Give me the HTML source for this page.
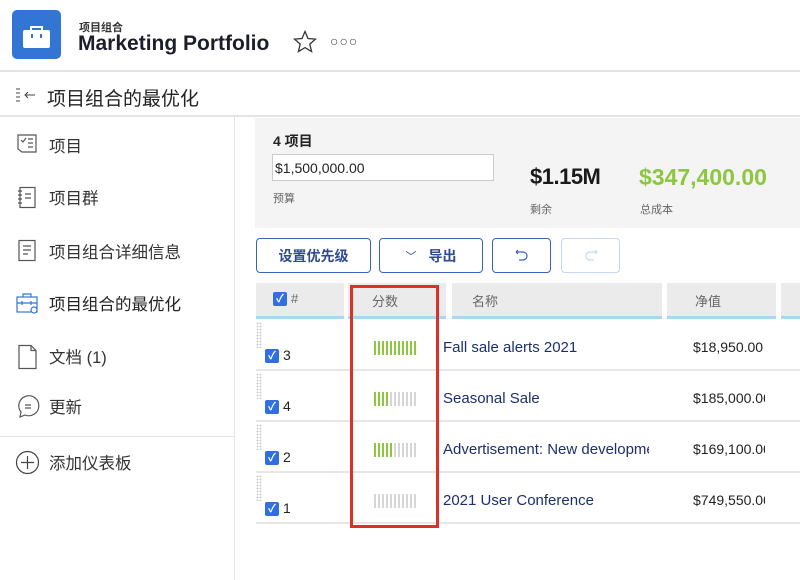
<!DOCTYPE html>
<html><head><meta charset="utf-8"><style>
*{margin:0;padding:0;box-sizing:border-box}
body{width:800px;height:580px;overflow:hidden;background:#fff;font-family:"Liberation Sans","Noto Sans CJK SC",sans-serif;color:#222;position:relative}
.a{position:absolute}
.side{font-size:16.5px;color:#333}
.btn{position:absolute;top:238px;height:35px;border:1.5px solid #3b63b8;border-radius:4px;color:#2d4b8e;font-size:14px;font-weight:bold;display:flex;align-items:center;justify-content:center}
.th{position:absolute;top:283px;height:36px;background:#ebebeb;border-bottom:3px solid #a9d8f5;font-size:13px;color:#666;padding:8px 0 0 20px}
.row{position:absolute;left:256px;width:544px;height:51px;border-bottom:2px solid #e6e6e6}
.cb{position:absolute;width:14px;height:14px;background:#2f6fe0;border-radius:2px;color:#fff;font-size:11px;line-height:14px;text-align:center;font-weight:bold}
.bars{position:absolute;left:118px;top:21px;display:flex;gap:2px}
.bars i{display:block;width:2px;height:14px;background:#d6d6d6}
.bars i.g{background:#8dc63f}
.nm{position:absolute;left:187px;top:19px;font-size:15px;color:#1c2e6e;width:206px;overflow:hidden;white-space:nowrap}
.val{position:absolute;left:437px;top:19px;font-size:14px;color:#222;width:72px;overflow:hidden;white-space:nowrap}
.dots{position:absolute;left:0;top:2px;width:6px;height:26px;background-image:radial-gradient(#ccc 0.8px,transparent 1px);background-size:3px 3px}
</style></head><body>
<!-- header -->
<div class="a" style="left:12px;top:10px;width:49px;height:49px;background:#3275d4;border-radius:5px"></div>
<svg class="a" style="left:12px;top:10px" width="49" height="49"><path d="M19 20v-3h11v3" stroke="#fff" stroke-width="2" fill="none"/><rect x="11" y="20" width="27" height="18" rx="2" fill="#fff"/><rect x="19" y="24" width="2" height="4" fill="#3275d4"/><rect x="28" y="24" width="2" height="4" fill="#3275d4"/></svg>
<div class="a" style="left:79px;top:19px;font-size:11px;font-weight:bold;color:#333">项目组合</div>
<div class="a" style="left:78px;top:32px;font-size:21px;font-weight:bold;color:#1d1d2b">Marketing Portfolio</div>
<svg class="a" style="left:293px;top:30px" width="24" height="23"><path d="M12 1.5l3 7 7.5.6-5.7 5 1.8 7.4L12 17.6 5.4 21.5l1.8-7.4-5.7-5 7.5-.6z" fill="none" stroke="#333" stroke-width="1.3"/></svg>
<div class="a" style="left:330px;top:33px;font-size:14px;color:#444;letter-spacing:1px">○○○</div>
<div class="a" style="left:0;top:70px;width:800px;height:2px;background:#e4e4e4"></div>
<svg class="a" style="left:15px;top:87px" width="24" height="18"><g stroke="#444" stroke-width="1"><path d="M1 2h4M1 6h4M1 10h4M1 14h4M10 8h10M13 5l-3 3 3 3" fill="none"/></g></svg>
<div class="a" style="left:47px;top:84px;font-size:19px;color:#222">项目组合的最优化</div>
<div class="a" style="left:0;top:115px;width:800px;height:2px;background:#e4e4e4"></div>
<!-- sidebar -->
<div class="a" style="left:234px;top:117px;width:1px;height:463px;background:#e4e4e4"></div>
<svg class="a" style="left:16px;top:133px" width="24" height="24" fill="none" stroke="#555" stroke-width="1.2"><path d="M2 2h18v17H6l-4-3z"/><path d="M5 7l2 2 3-4M12 6h5M12 10h5M12 14h5"/></svg>
<div class="a side" style="left:49px;top:133px">项目</div>
<svg class="a" style="left:16px;top:186px" width="24" height="24" fill="none" stroke="#555" stroke-width="1.2"><rect x="4" y="1.5" width="15" height="20"/><path d="M2 5h4M2 9h4M2 13h4M2 17h4M9 8h6M9 12h6"/></svg>
<div class="a side" style="left:49px;top:185px">项目群</div>
<svg class="a" style="left:16px;top:239px" width="24" height="24" fill="none" stroke="#555" stroke-width="1.2"><rect x="3" y="1.5" width="16" height="20"/><path d="M7 7h8M7 11h8M7 15h5"/></svg>
<div class="a side" style="left:49px;top:239px">项目组合详细信息</div>
<svg class="a" style="left:16px;top:292px" width="24" height="24" fill="none" stroke="#3275d4" stroke-width="1.2"><rect x="1" y="5" width="20" height="15"/><path d="M7 5V2h8v3M1 11h20M6 9v4M15 9v4"/><circle cx="18" cy="18" r="3" fill="#fff"/></svg>
<div class="a side" style="left:49px;top:291px;color:#222">项目组合的最优化</div>
<svg class="a" style="left:16px;top:344px" width="24" height="26" fill="none" stroke="#555" stroke-width="1.2"><path d="M3 1.5h12l5 5v18H3z M15 1.5v5h5"/></svg>
<div class="a side" style="left:49px;top:344px">文档 (1)</div>
<svg class="a" style="left:16px;top:395px" width="24" height="26" fill="none" stroke="#555" stroke-width="1.2"><path d="M4 22l1-5A10 10 0 1 1 9 20z"/><path d="M9 10h6M9 13h6"/></svg>
<div class="a side" style="left:49px;top:394px">更新</div>
<div class="a" style="left:0;top:436px;width:234px;height:1px;background:#e4e4e4"></div>
<svg class="a" style="left:15px;top:450px" width="26" height="26" fill="none" stroke="#444" stroke-width="1.2"><circle cx="12.5" cy="12.5" r="11"/><path d="M12.5 6v13M6 12.5h13"/></svg>
<div class="a side" style="left:49px;top:450px">添加仪表板</div>
<!-- summary -->
<div class="a" style="left:255px;top:118px;width:545px;height:110px;background:#f4f4f4"></div>
<div class="a" style="left:273px;top:131px;font-size:14px;font-weight:bold;color:#222">4 项目</div>
<div class="a" style="left:272px;top:154px;width:222px;height:27px;background:#fff;border:1px solid #ccc;font-size:14px;padding:5px 2px;color:#222">$1,500,000.00</div>
<div class="a" style="left:273px;top:190px;font-size:11px;color:#666">预算</div>
<div class="a" style="left:530px;top:164px;font-size:22px;font-weight:bold;color:#1a1a1a;letter-spacing:-0.5px">$1.15M</div>
<div class="a" style="left:530px;top:201px;font-size:11px;color:#666">剩余</div>
<div class="a" style="left:639px;top:164px;font-size:23px;font-weight:bold;color:#8dc63f">$347,400.00</div>
<div class="a" style="left:640px;top:201px;font-size:11px;color:#666">总成本</div>
<!-- buttons -->
<div class="btn" style="left:256px;width:115px">设置优先级</div>
<div class="btn" style="left:379px;width:104px"><span style="font-weight:normal;font-size:11px;margin-right:12px">﹀</span>导出</div>
<div class="btn" style="left:492px;width:59px"><svg width="16" height="14" fill="none" stroke="#3b63b8" stroke-width="1.2"><path d="M2 3l2 -2M2 3l2 2M2 3h7a4 4 0 0 1 0 8H5"/></svg></div>
<div class="btn" style="left:561px;width:59px;border-color:#c6d6ef"><svg width="16" height="14" fill="none" stroke="#c6d6ef" stroke-width="1.2"><path d="M14 3l-2-2M14 3l-2 2M14 3H7a4 4 0 0 0 0 8h4"/></svg></div>
<!-- table header -->
<div class="th" style="left:256px;width:88px;padding-left:17px"><span class="cb" style="left:17px;top:9px">✓</span><span style="margin-left:18px">#</span></div>
<div class="th" style="left:348px;width:98px;padding-left:24px">分数</div>
<div class="th" style="left:452px;width:210px">名称</div>
<div class="th" style="left:667px;width:109px;padding-left:28px">净值</div>
<div class="th" style="left:781px;width:19px"></div>
<!-- rows -->
<div class="row" style="top:320px"><div class="dots"></div><span class="cb" style="left:9px;top:29px">✓</span><span class="a" style="left:27px;top:27px;font-size:14px">3</span><div class="bars"><i class="g"></i><i class="g"></i><i class="g"></i><i class="g"></i><i class="g"></i><i class="g"></i><i class="g"></i><i class="g"></i><i class="g"></i><i class="g"></i><i class="g"></i></div><div class="nm">Fall sale alerts 2021</div><div class="val">$18,950.00</div></div>
<div class="row" style="top:371px"><div class="dots"></div><span class="cb" style="left:9px;top:29px">✓</span><span class="a" style="left:27px;top:27px;font-size:14px">4</span><div class="bars"><i class="g"></i><i class="g"></i><i class="g"></i><i class="g"></i><i></i><i></i><i></i><i></i><i></i><i></i><i></i></div><div class="nm">Seasonal Sale</div><div class="val">$185,000.00</div></div>
<div class="row" style="top:422px"><div class="dots"></div><span class="cb" style="left:9px;top:29px">✓</span><span class="a" style="left:27px;top:27px;font-size:14px">2</span><div class="bars"><i class="g"></i><i class="g"></i><i class="g"></i><i class="g"></i><i class="g"></i><i></i><i></i><i></i><i></i><i></i><i></i></div><div class="nm">Advertisement: New development</div><div class="val">$169,100.00</div></div>
<div class="row" style="top:473px"><div class="dots"></div><span class="cb" style="left:9px;top:29px">✓</span><span class="a" style="left:27px;top:27px;font-size:14px">1</span><div class="bars"><i></i><i></i><i></i><i></i><i></i><i></i><i></i><i></i><i></i><i></i><i></i></div><div class="nm">2021 User Conference</div><div class="val">$749,550.00</div></div>
<!-- red highlight -->
<div class="a" style="left:350px;top:285px;width:89px;height:243px;border:3px solid #d9322a"></div>
</body></html>
